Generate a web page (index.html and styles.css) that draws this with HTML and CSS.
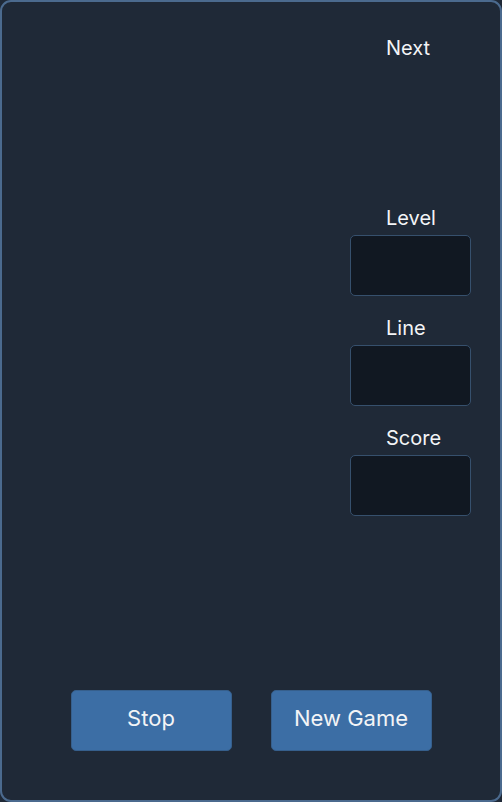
FILE: index.html
```html
<!DOCTYPE html>
<html>
<head>
<meta charset="utf-8">
<link rel="stylesheet" href="styles.css">
</head>
<body>
<div class="panel">
  <div class="main">
    <div class="board"></div>
    <div class="side">
      <div class="label">Next</div>
      <div class="preview"></div>
      <div class="label">Level</div>
      <div class="box"></div>
      <div class="label">Line</div>
      <div class="box"></div>
      <div class="label">Score</div>
      <div class="box"></div>
    </div>
  </div>
  <div class="buttons">
    <button class="btn">Stop</button>
    <button class="btn">New Game</button>
  </div>
</div>
</body>
</html>
```
FILE: styles.css
```css
html, body {
  margin: 0;
  padding: 0;
  background: #1f2937;
}
body {
  font-family: Inter, "Noto Sans", sans-serif;
  color: #f3f4f6;
}
.panel {
  box-sizing: border-box;
  width: 502px;
  height: 802px;
  border: 2px solid #4b6a8e;
  border-radius: 11px;
  background: #1f2937;
  display: flex;
  flex-direction: column;
}
.main {
  flex: 1;
  display: flex;
  padding: 34px 29px 0 0;
}
.board {
  flex: 1;
}
.side {
  width: 121px;
  display: flex;
  flex-direction: column;
}
.label {
  font-size: 20px;
  line-height: 24px;
  padding-left: 36px;
  margin-bottom: 5px;
}
.preview {
  height: 141px;
}
.box {
  box-sizing: border-box;
  height: 61px;
  background: #111822;
  border: 1px solid #36506d;
  border-radius: 5px;
  margin-bottom: 20px;
}
.buttons {
  display: flex;
  justify-content: center;
  gap: 39px;
  padding-bottom: 49px;
}
.btn {
  box-sizing: border-box;
  width: 161px;
  height: 61px;
  background: #3c6ea5;
  border: 1px solid #365f8c;
  border-radius: 5px;
  color: #f3f4f6;
  font-family: Inter, "Noto Sans", sans-serif;
  font-size: 22px;
  padding: 0 0 5px 0;
}
```
